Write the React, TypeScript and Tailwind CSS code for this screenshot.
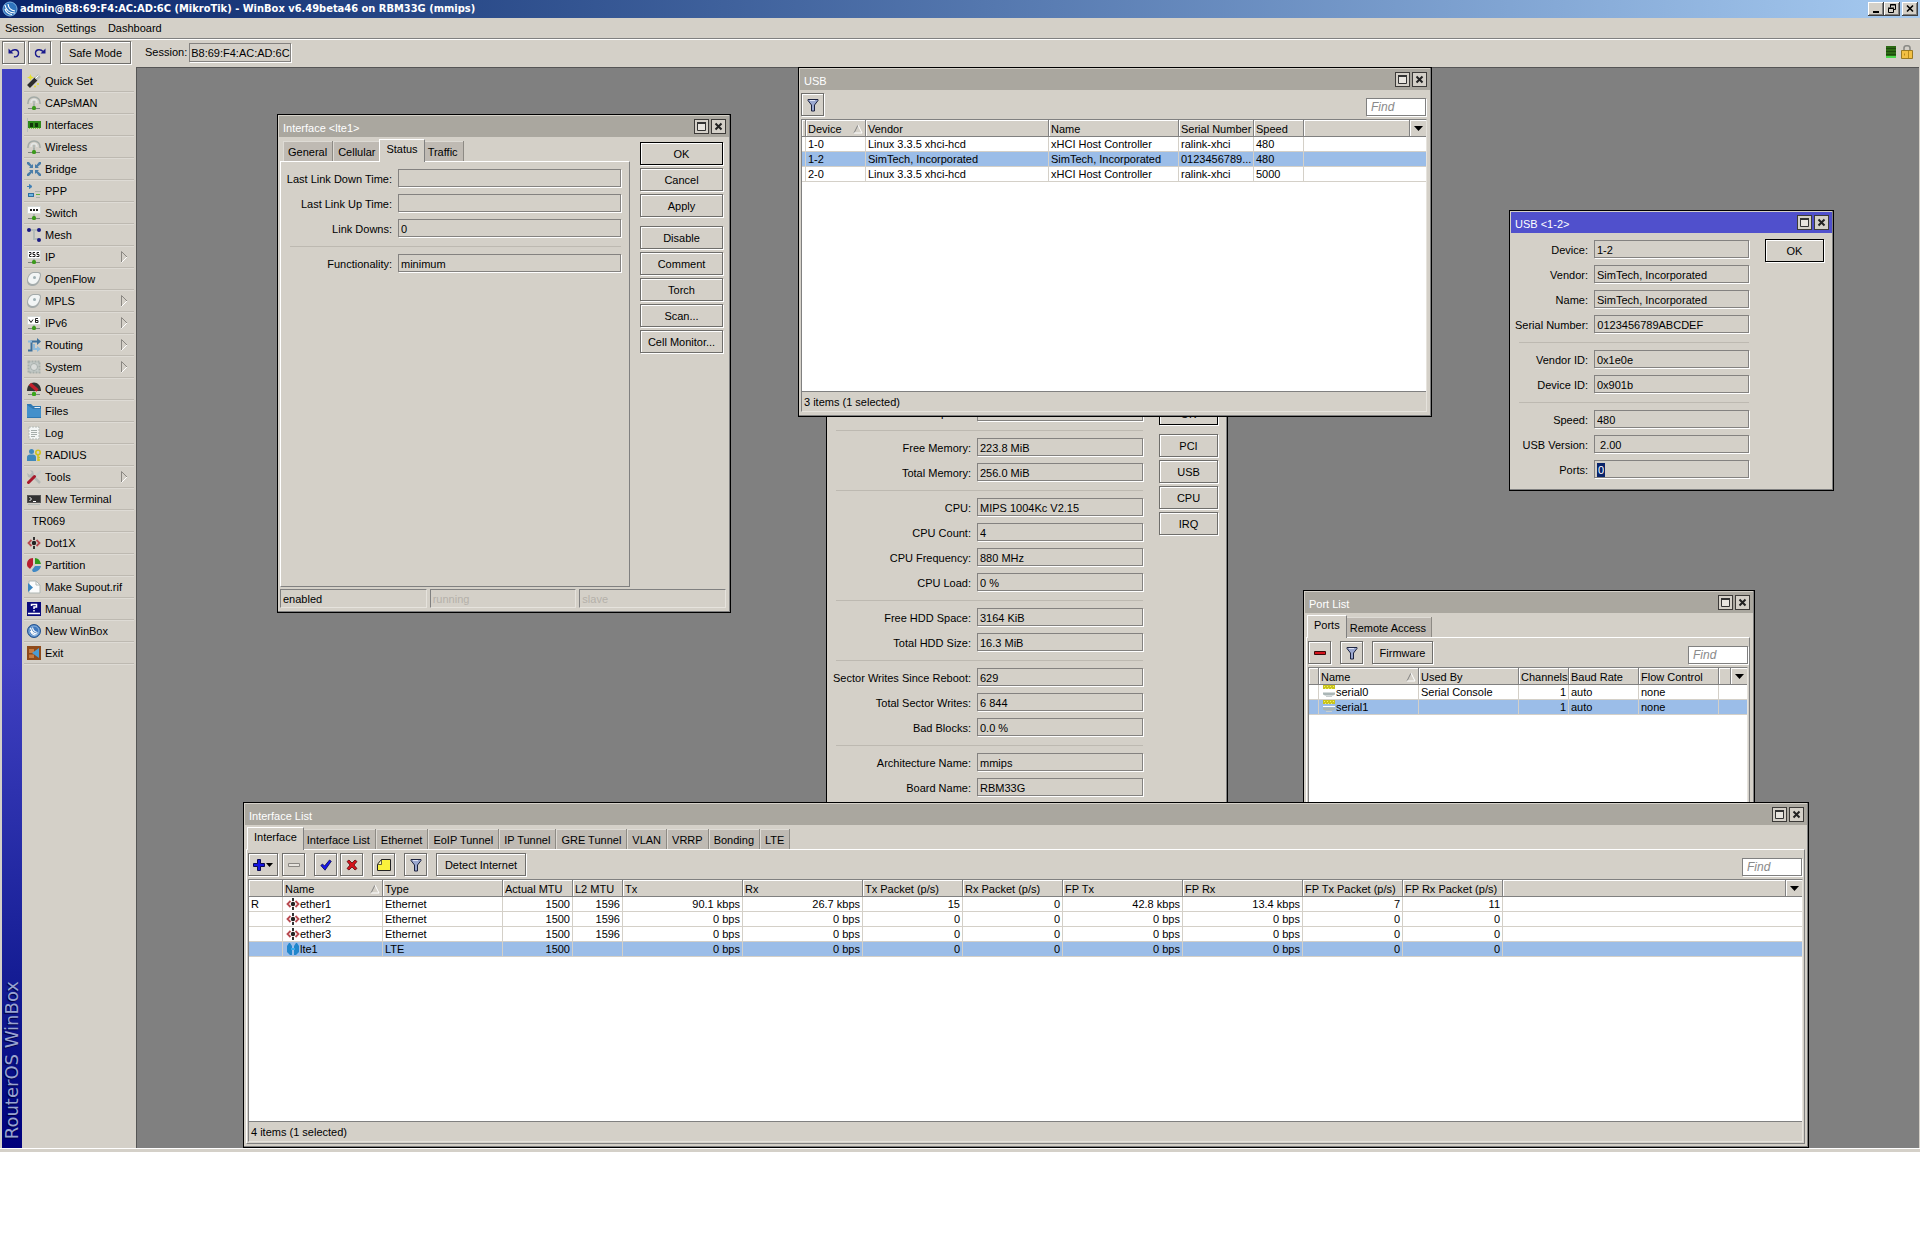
import { ReactNode, useId } from 'react';
import clsx from 'clsx';

type IconName =
  | 'wand' | 'antenna' | 'card' | 'bridge' | 'ppp' | 'switch' | 'mesh' | 'ip' | 'tag' | 'ipv6'
  | 'routing' | 'gear' | 'queues' | 'folder' | 'log' | 'radius' | 'tools' | 'terminal' | 'ether'
  | 'partition' | 'supout' | 'manual' | 'winbox' | 'exit' | 'serial' | 'lte';

const stand = (
  <>
    <path d="M7 8v4" stroke="#a9b0ac" strokeWidth="2" />
    <path d="M1 12.5h12" stroke="#7d837f" strokeWidth="1" />
    <rect x="5" y="10" width="4" height="4" rx="1.5" fill="#3c9a1c" />
  </>
);

const icons: Record<IconName, ReactNode> = {
  wand: (
    <>
      <path d="M1.500 12.500L9 5" stroke="#2c2c2c" strokeWidth="4" />
      <path d="M9 5l3.500-3.500" stroke="#b9bdbb" strokeWidth="4" />
      <path d="M8.500 4.500l3-3" stroke="#fff" strokeWidth="1" />
      <path d="M3.500 0l1 2.500L7 3.500l-2.500 1L3.500 7l-1-2.500L0 3.500l2.500-1z" fill="#e5e030" />
      <circle cx="11" cy="10" r="1" fill="#e5e030" />
      <circle cx="8" cy="12.500" r="1" fill="#e5e030" />
    </>
  ),
  antenna: (
    <>
      <path d="M1 8C.5 3.500 3.500 1 7 1s6.500 2.500 6 7" fill="none" stroke="#a3aaa6" strokeWidth="1.500" />
      <path d="M4 7c0-2.500 1-3.500 3-3.500s3 1 3 3.500" fill="none" stroke="#e3e6e5" strokeWidth="1.500" />
      <path d="M7 5v6" stroke="#b3bab6" strokeWidth="2" />
      {stand}
    </>
  ),
  card: (
    <>
      <path d="M.5 0v14" stroke="#b8bebb" strokeWidth="1" />
      <rect x="1" y="3" width="13" height="7" fill="#2f8a1a" />
      <rect x="3" y="5" width="3" height="4" fill="#12380a" />
      <rect x="8" y="5" width="3" height="4" fill="#12380a" />
      <path d="M2 10.500h12" stroke="#8ac63f" strokeWidth="1" strokeDasharray="1 1" />
    </>
  ),
  bridge: (
    <g fill="#4a7da8">
      <path d="M6 6H2l1.300-1.300L0 2V0h2l2.700 3.300L6 2zM8 6h4l-1.300-1.300L14 2V0h-2L9.300 3.300 8 2zM6 8H2l1.300 1.300L0 12v2h2l2.700-3.300L6 12zM8 8h4l-1.300 1.300L14 12v2h-2l-2.700-3.300L8 12z" />
    </g>
  ),
  ppp: (
    <>
      <path d="M0 2.500h3M2.500.5l2.500 2-2.500 2z" stroke="#3f7fb5" strokeWidth="1" fill="#3f7fb5" />
      <rect x="1.500" y="9.500" width="5" height="3" fill="#6db4e0" stroke="#2f6f9f" />
      <path d="M8 7.500h6M9 13.500h4" stroke="#a9b0ac" />
      <path d="M9 10.500h4" stroke="#5fae3a" />
    </>
  ),
  switch: (
    <>
      {stand}
      <rect x=".5" y=".5" width="13" height="7" fill="#fff" stroke="#d5d9d7" />
      <path d="M3 4h8" stroke="#222" strokeWidth="2" strokeDasharray="2 1" />
    </>
  ),
  mesh: (
    <>
      <path d="M2 2h10M7 2v9h5" fill="none" stroke="#b3bbb8" strokeWidth="2" />
      <circle cx="2" cy="2" r="2" fill="#1b1b82" />
      <circle cx="12" cy="2" r="2" fill="#1b1b82" />
      <circle cx="12" cy="12" r="2" fill="#1b1b82" />
    </>
  ),
  ip: (
    <>
      {stand}
      <rect x=".5" y=".5" width="13" height="8" fill="#fff" stroke="#d5d9d7" />
      <path d="M2 2.500h2v2H2.500v2H4.500M8 2.500H6v2h2v2H5.500M12 2.500h-2v2h2v2H9.500" fill="none" stroke="#222" />
    </>
  ),
  tag: (
    <>
      <path d="M6 0h5c2 0 3 1 3 3-1 7-4 11-8 11-4 0-6-2-6-5 0-4 2-8 6-9z" fill="#a4abab" />
      <path d="M6 1h5c1 0 2 1 2 2-1 6-4 9-7 9-3 0-5-2-5-4 0-3 2-6 5-7z" fill="#f2f5f5" />
      <circle cx="7.500" cy="5.500" r="1.500" fill="#9fb0b4" />
    </>
  ),
  ipv6: (
    <>
      {stand}
      <rect x=".5" y=".5" width="13" height="8" fill="#fff" stroke="#d5d9d7" />
      <path d="M2 3.500l2 3 2-3M11 2.500H8.500v4H11v-2H8.500" fill="none" stroke="#222" />
    </>
  ),
  routing: (
    <>
      <path d="M1 12.500h3.500V3.500H11" fill="none" stroke="#3e719c" strokeWidth="2" />
      <path d="M10 0l4 3.500L10 7z" fill="#3e719c" />
      <path d="M1 3.500h4M7 6v5h4" fill="none" stroke="#8fbbdc" strokeWidth="2" />
      <path d="M10 8l4 3-4 3z" fill="#8fbbdc" />
    </>
  ),
  gear: (
    <>
      <rect x="1.500" y="1.500" width="11" height="11" fill="#c5cbc9" stroke="#a7afac" strokeDasharray="2 1" strokeWidth="2" />
      <circle cx="7" cy="7" r="3.500" fill="#d9dcda" stroke="#a7afac" />
    </>
  ),
  queues: (
    <>
      {stand}
      <path d="M0 9C0-2.500 14-2.500 14 9z" fill="#333" />
      <path d="M3 2L10.500 8.500" stroke="#c3202c" strokeWidth="3.500" />
      <rect x="5" y="10" width="4" height="4" rx="2" fill="#3aa81c" />
    </>
  ),
  folder: (
    <>
      <path d="M0 0h4l2 2h8v12H0z" fill="#2f78b2" />
      <path d="M7 3h6v1H8z" fill="#e8f1f8" />
      <path d="M0 1l6 4h8v8H0z" fill="#4390cb" />
    </>
  ),
  log: (
    <>
      <path d="M2 1h10v12H2z" fill="#f4f6f5" stroke="#b3bab7" strokeDasharray="2 1" />
      <path d="M4 4.500h6M4 6.500h6M4 8.500h6M4 10.500h4" stroke="#a5adaa" />
    </>
  ),
  radius: (
    <>
      <circle cx="4.500" cy="3.500" r="2.500" fill="#3f88bb" />
      <path d="M0 13V9c0-2 2-2.500 4.500-2.500S9 7 9 9v4z" fill="#3f88bb" />
      <circle cx="11" cy="4.500" r="2.200" fill="none" stroke="#cfc21a" strokeWidth="1.600" />
      <path d="M11 7v6M11 9.500h2M11 12h2" stroke="#cfc21a" strokeWidth="1.500" />
    </>
  ),
  tools: (
    <>
      <path d="M13 13L4 4" stroke="#b4bab7" strokeWidth="2.500" />
      <path d="M0 3l3 2 2-2-2-3 3 1 1 4-3 3-3-1z" fill="#b4bab7" />
      <path d="M14 1L8 7" stroke="#c8cdca" strokeWidth="2" />
      <path d="M7.500 6.500L1.500 12.500" stroke="#a81a2c" strokeWidth="3" strokeLinecap="round" />
    </>
  ),
  terminal: (
    <>
      <rect x=".5" y="3.500" width="13" height="7" fill="#333" stroke="#555" />
      <path d="M2.500 5l2 2-2 2M6 9.500h3" stroke="#fff" fill="none" />
      <path d="M1 12.500h12" stroke="#b4bab7" />
    </>
  ),
  ether: (
    <>
      <path d="M4.500 4L1.500 7l3 3M9.500 4l3 3-3 3" fill="none" stroke="#b84a50" strokeWidth="1.800" />
      <path d="M7 1v3M7 10v3" stroke="#333" strokeWidth="2" />
      <circle cx="7" cy="7" r="2.200" fill="#222" />
    </>
  ),
  partition: (
    <>
      <path d="M6 0C2 0 0 3 0 6s1 3 3 5l3-4z" fill="#b81e30" />
      <path d="M8 0c3 0 5 2 6 6H8z" fill="#2f9a1c" />
      <path d="M14 8c-1 4-4 6-8 6l-1-2 3-4z" fill="#3f88c4" />
    </>
  ),
  supout: (
    <>
      <path d="M2 1h7l4 4v8H2z" fill="#fbfcfc" stroke="#b0b8b5" />
      <path d="M9 1v4h4" fill="none" stroke="#b0b8b5" />
      <path d="M1 3l5 4.500L1 12z" fill="#3a86bf" />
    </>
  ),
  manual: (
    <>
      <rect width="14" height="14" fill="#0a0a7c" />
      <path d="M1 11.500h12" stroke="#fff" strokeWidth="1.500" />
      <path d="M4.500 4V2.500h5V5H7v2M7 8v1.500" stroke="#fff" strokeWidth="1.500" fill="none" />
    </>
  ),
  winbox: (
    <>
      <circle cx="7" cy="7" r="6.500" fill="#3f78bd" stroke="#27548f" />
      <circle cx="7" cy="7" r="5" fill="none" stroke="#8db6e0" />
      <path d="M3.500 4c1 4 3 6 7 6M5.500 3.500c.5 3 2 4.500 5 5M3.500 7c1 2.500 3 4 5 4" fill="none" stroke="#fff" strokeWidth="1.200" />
    </>
  ),
  exit: (
    <>
      <rect width="14" height="14" fill="#8f4a1a" />
      <path d="M2 3h5v4H2zM2 8.500h5V12H2z" fill="#c77b40" />
      <path d="M12 2v10L5 7z" fill="#4b9cd3" />
    </>
  ),
  serial: (
    <>
      <path d="M1 0h12v4H1z" fill="#c9c41c" />
      <path d="M2 1.500h10M3 3.500h9" stroke="#f3ef70" strokeDasharray="1 2" />
      <path d="M1 6.500h12" stroke="#fff" />
      <path d="M1 7.500h12v2l-2 1H3l-2-1z" fill="#aab6b6" />
      <path d="M4 11.500h6" stroke="#c9cfcf" />
    </>
  ),
  lte: (
    <g fill="#2186cc">
      <path d="M3 1h1l2 3v9H4l-2-2-1-1V4z" />
      <path d="M11 1h-1L8 4v9h2l2-2 1-1V4z" />
      <path d="M5 6h4v2H5z" fill="#3aa9ea" />
    </g>
  ),
};

const Icon = ({ name }: { name: IconName }) => (
  <svg viewBox="0 0 14 14" className="size-3.5 shrink-0" aria-hidden="true">
    {icons[name]}
  </svg>
);

const FunnelIcon = () => (
  <svg viewBox="0 0 14 14" className="size-3.5" aria-hidden="true">
    <path d="M2 1.500h10v1L8.500 7v6h-3V7L2 2.500z" fill="#9aa7cf" stroke="#1c2340" />
    <path d="M4 2.500h5" stroke="#dfe4f5" />
  </svg>
);

interface WinButtonProps {
  children: ReactNode;
  label?: string;
  className?: string;
  isDefault?: boolean;
}

const WinButton = ({ children, label, className, isDefault }: WinButtonProps) => (
  <button
    type="button"
    aria-label={label}
    className={clsx(
      'flex h-[23px] shrink-0 items-center justify-center border whitespace-nowrap shadow-[1px_1px_0_#fff,inset_1px_1px_0_#fff]',
      isDefault ? 'border-black' : 'border-[#6f6e6b]',
      className,
    )}
  >
    {children}
  </button>
);

const FindBox = () => (
  <input
    type="text"
    aria-label="Find"
    placeholder="Find"
    className="h-[18px] w-[60px] border border-[#808080] bg-white px-1 text-xs italic shadow-[1px_1px_0_#fff] outline-none placeholder:text-[#8a8a8a]"
  />
);

interface WindowProps {
  title: string;
  className: string;
  active?: boolean;
  children: ReactNode;
}

const Window = ({ title, className, active, children }: WindowProps) => (
  <section
    className={clsx(
      'absolute flex flex-col border border-black bg-[#d4d0c8] p-px shadow-[inset_-1px_-1px_0_#808080]',
      className,
    )}
  >
    <header
      className={clsx(
        'flex h-[21px] shrink-0 items-center gap-0.5 pr-[3px] pl-1 text-white',
        active ? 'bg-[#5050cc]' : 'bg-[#aaa79f]',
      )}
    >
      <h2 className="flex-1 pt-0.5">{title}</h2>
      <button type="button" aria-label="Maximize" className="size-[15px] border border-[#3c3a38] bg-[#d4d0c8]">
        <svg viewBox="0 0 13 13" className="size-[13px]" aria-hidden="true">
          <path d="M2.500 2.500h8v8h-8z" fill="#e8e5df" stroke="#333" />
          <path d="M2 3h9" stroke="#333" strokeWidth="2" />
        </svg>
      </button>
      <button type="button" aria-label="Close" className="size-[15px] border border-[#3c3a38] bg-[#d4d0c8]">
        <svg viewBox="0 0 13 13" className="size-[13px]" aria-hidden="true">
          <path d="M3.500 3.500l6 6M9.500 3.500l-6 6" stroke="#222" strokeWidth="2" />
        </svg>
      </button>
    </header>
    {children}
  </section>
);

interface TabsProps {
  tabs: string[];
  selected: string;
}

const Tabs = ({ tabs, selected }: TabsProps) => (
  <div role="tablist" className="relative z-10 -mb-px flex h-[25px] shrink-0 items-end pl-[3px]">
    {tabs.map((tab) =>
      tab === selected ? (
        <button
          key={tab}
          type="button"
          role="tab"
          aria-selected="true"
          className="relative z-10 -mx-0.5 h-[23px] border-t border-r border-l border-t-white border-r-[#808080] border-l-white bg-[#d4d0c8] px-[6px] pb-1"
        >
          {tab}
        </button>
      ) : (
        <button
          key={tab}
          type="button"
          role="tab"
          aria-selected="false"
          className="mb-px h-5 border-r border-[#8d8a84] bg-[#bfbab3] px-[5px] pt-px whitespace-nowrap shadow-[inset_1px_1px_0_#dedbd5]"
        >
          {tab}
        </button>
      ),
    )}
  </div>
);

interface FieldProps {
  label: string;
  value: string;
  selected?: boolean;
}

const Field = ({ label, value, selected }: FieldProps) => {
  const id = useId();
  return (
    <div className="flex h-[18px] items-center gap-[6px]">
      <label htmlFor={id} className="flex-1 pt-0.5 text-right whitespace-nowrap">
        {label}
      </label>
      <div className="flex h-[18px] w-(--field) shrink-0 items-end border border-[#848280] px-0.5 shadow-[1px_1px_0_#fff]">
        <input
          id={id}
          readOnly
          value={value}
          className={clsx(
            'h-3.5 min-w-0 outline-none',
            selected ? 'w-2 bg-[#0a246a] px-px text-white' : 'w-full bg-transparent',
          )}
        />
      </div>
    </div>
  );
};

const Form = ({ groups, className }: { groups: FieldProps[][]; className: string }) => (
  <div className={clsx('flex min-w-0 flex-col gap-[7px] pl-1', className)}>
    {groups.map((group, i) => (
      <div key={group[0].label} className="flex flex-col gap-[7px]">
        {i > 0 && <hr className="mt-0.5 ml-1 border-[#bdb9b1]" />}
        {group.map((field) => (
          <Field key={field.label} {...field} />
        ))}
      </div>
    ))}
  </div>
);

interface Column {
  title: string;
  width: string;
  right?: boolean;
  sorted?: boolean;
}

interface Row {
  cells: string[];
  icon?: IconName;
  selected?: boolean;
}

const ListTable = ({ columns, rows }: { columns: Column[]; rows: Row[] }) => (
  <table className="w-full table-fixed border-separate border-spacing-0 leading-[14px]">
    <colgroup>
      {columns.map((col, i) => (
        <col key={i} className={col.width} />
      ))}
      <col />
      <col className="w-4" />
    </colgroup>
    <thead>
      <tr className="bg-[#d4d0c8]">
        {columns.map((col, i) => (
          <th
            key={i}
            className="h-[17px] border-r border-b border-[#808080] p-0 pt-px pl-0.5 text-left font-normal whitespace-nowrap shadow-[inset_1px_1px_0_#fff]"
          >
            <div className="flex items-center justify-between">
              {col.title}
              {col.sorted && (
                <svg viewBox="0 0 10 10" className="mr-0.5 size-2.5 shrink-0" aria-hidden="true">
                  <path d="M1 9L5 1" stroke="#808080" />
                  <path d="M5 1l4 8H1" fill="none" stroke="#fff" />
                </svg>
              )}
            </div>
          </th>
        ))}
        <th className="border-r border-b border-[#808080] p-0 shadow-[inset_1px_1px_0_#fff]" />
        <th className="border-b border-[#808080] p-0 shadow-[inset_1px_1px_0_#fff]">
          <button type="button" aria-label="Columns" className="flex h-4 w-full items-center justify-center">
            <svg viewBox="0 0 9 5" className="h-[5px] w-[9px]" aria-hidden="true">
              <path d="M0 0h9L4.500 5z" />
            </svg>
          </button>
        </th>
      </tr>
    </thead>
    <tbody>
      {rows.map((row) => (
        <tr key={row.cells[1]} className={row.selected ? 'bg-[#9bbde8]' : 'bg-white'}>
          {row.cells.map((cell, i) => (
            <td
              key={i}
              className={clsx(
                'h-[15px] overflow-hidden border-r border-b border-[#d4d0c8] p-0 whitespace-nowrap',
                columns[i].right ? 'pr-0.5 text-right' : 'pl-0.5',
              )}
            >
              {i === 1 && row.icon ? (
                <div className="flex h-3.5 items-center pl-px">
                  <Icon name={row.icon} />
                  {cell}
                </div>
              ) : (
                cell
              )}
            </td>
          ))}
          <td colSpan={2} className="border-b border-[#d4d0c8] p-0" />
        </tr>
      ))}
    </tbody>
  </table>
);

const menu: { label: string; icon?: IconName; more?: boolean }[] = [
  { label: 'Quick Set', icon: 'wand' },
  { label: 'CAPsMAN', icon: 'antenna' },
  { label: 'Interfaces', icon: 'card' },
  { label: 'Wireless', icon: 'antenna' },
  { label: 'Bridge', icon: 'bridge' },
  { label: 'PPP', icon: 'ppp' },
  { label: 'Switch', icon: 'switch' },
  { label: 'Mesh', icon: 'mesh' },
  { label: 'IP', icon: 'ip', more: true },
  { label: 'OpenFlow', icon: 'tag' },
  { label: 'MPLS', icon: 'tag', more: true },
  { label: 'IPv6', icon: 'ipv6', more: true },
  { label: 'Routing', icon: 'routing', more: true },
  { label: 'System', icon: 'gear', more: true },
  { label: 'Queues', icon: 'queues' },
  { label: 'Files', icon: 'folder' },
  { label: 'Log', icon: 'log' },
  { label: 'RADIUS', icon: 'radius' },
  { label: 'Tools', icon: 'tools', more: true },
  { label: 'New Terminal', icon: 'terminal' },
  { label: 'TR069' },
  { label: 'Dot1X', icon: 'ether' },
  { label: 'Partition', icon: 'partition' },
  { label: 'Make Supout.rif', icon: 'supout' },
  { label: 'Manual', icon: 'manual' },
  { label: 'New WinBox', icon: 'winbox' },
  { label: 'Exit', icon: 'exit' },
];

const usbColumns: Column[] = [
  { title: '', width: 'w-[4px]' },
  { title: 'Device', width: 'w-[60px]', sorted: true },
  { title: 'Vendor', width: 'w-[183px]' },
  { title: 'Name', width: 'w-[130px]' },
  { title: 'Serial Number', width: 'w-[75px]' },
  { title: 'Speed', width: 'w-[50px]' },
];

const usbRows: Row[] = [
  { cells: ['', '1-0', 'Linux 3.3.5 xhci-hcd', 'xHCI Host Controller', 'ralink-xhci', '480'] },
  { cells: ['', '1-2', 'SimTech, Incorporated', 'SimTech, Incorporated', '0123456789...', '480'], selected: true },
  { cells: ['', '2-0', 'Linux 3.3.5 xhci-hcd', 'xHCI Host Controller', 'ralink-xhci', '5000'] },
];

const portColumns: Column[] = [
  { title: '', width: 'w-[10px]' },
  { title: 'Name', width: 'w-[100px]', sorted: true },
  { title: 'Used By', width: 'w-[100px]' },
  { title: 'Channels', width: 'w-[50px]', right: true },
  { title: 'Baud Rate', width: 'w-[70px]' },
  { title: 'Flow Control', width: 'w-[80px]' },
];

const portRows: Row[] = [
  { cells: ['', 'serial0', 'Serial Console', '1', 'auto', 'none'], icon: 'serial' },
  { cells: ['', 'serial1', '', '1', 'auto', 'none'], icon: 'serial', selected: true },
];

const interfaceColumns: Column[] = [
  { title: '', width: 'w-[34px]' },
  { title: 'Name', width: 'w-[100px]', sorted: true },
  { title: 'Type', width: 'w-[120px]' },
  { title: 'Actual MTU', width: 'w-[70px]', right: true },
  { title: 'L2 MTU', width: 'w-[50px]', right: true },
  { title: 'Tx', width: 'w-[120px]', right: true },
  { title: 'Rx', width: 'w-[120px]', right: true },
  { title: 'Tx Packet (p/s)', width: 'w-[100px]', right: true },
  { title: 'Rx Packet (p/s)', width: 'w-[100px]', right: true },
  { title: 'FP Tx', width: 'w-[120px]', right: true },
  { title: 'FP Rx', width: 'w-[120px]', right: true },
  { title: 'FP Tx Packet (p/s)', width: 'w-[100px]', right: true },
  { title: 'FP Rx Packet (p/s)', width: 'w-[100px]', right: true },
];

const idle = ['0 bps', '0 bps', '0', '0', '0 bps', '0 bps', '0', '0'];

const interfaceRows: Row[] = [
  {
    cells: ['R', 'ether1', 'Ethernet', '1500', '1596', '90.1 kbps', '26.7 kbps', '15', '0', '42.8 kbps', '13.4 kbps', '7', '11'],
    icon: 'ether',
  },
  { cells: ['', 'ether2', 'Ethernet', '1500', '1596', ...idle], icon: 'ether' },
  { cells: ['', 'ether3', 'Ethernet', '1500', '1596', ...idle], icon: 'ether' },
  { cells: ['', 'lte1', 'LTE', '1500', '', ...idle], icon: 'lte', selected: true },
];

const interfaceStatus: FieldProps[][] = [
  [
    { label: 'Last Link Down Time:', value: '' },
    { label: 'Last Link Up Time:', value: '' },
    { label: 'Link Downs:', value: '0' },
  ],
  [{ label: 'Functionality:', value: 'minimum' }],
];

const usbDevice: FieldProps[][] = [
  [
    { label: 'Device:', value: '1-2' },
    { label: 'Vendor:', value: 'SimTech, Incorporated' },
    { label: 'Name:', value: 'SimTech, Incorporated' },
    { label: 'Serial Number:', value: '0123456789ABCDEF' },
  ],
  [
    { label: 'Vendor ID:', value: '0x1e0e' },
    { label: 'Device ID:', value: '0x901b' },
  ],
  [
    { label: 'Speed:', value: '480' },
    { label: 'USB Version:', value: ' 2.00' },
    { label: 'Ports:', value: '0', selected: true },
  ],
];

const resources: FieldProps[][] = [
  [{ label: 'Uptime:', value: '' }],
  [
    { label: 'Free Memory:', value: '223.8 MiB' },
    { label: 'Total Memory:', value: '256.0 MiB' },
  ],
  [
    { label: 'CPU:', value: 'MIPS 1004Kc V2.15' },
    { label: 'CPU Count:', value: '4' },
    { label: 'CPU Frequency:', value: '880 MHz' },
    { label: 'CPU Load:', value: '0 %' },
  ],
  [
    { label: 'Free HDD Space:', value: '3164 KiB' },
    { label: 'Total HDD Size:', value: '16.3 MiB' },
  ],
  [
    { label: 'Sector Writes Since Reboot:', value: '629' },
    { label: 'Total Sector Writes:', value: '6 844' },
    { label: 'Bad Blocks:', value: '0.0 %' },
  ],
  [
    { label: 'Architecture Name:', value: 'mmips' },
    { label: 'Board Name:', value: 'RBM33G' },
  ],
];

const ListFrame = ({ children, status }: { children: ReactNode; status: string }) => (
  <div className="flex flex-1 flex-col border border-t-[#808080] border-r-[#e6e3dd] border-b-[#e6e3dd] border-l-[#808080]">
    <div className="flex-1 bg-white">{children}</div>
    <div className="h-5 shrink-0 border-t border-[#808080] pt-px pl-0.5 leading-[18px]">{status}</div>
  </div>
);

const InterfaceWindow = () => (
  <Window title="Interface <lte1>" className="top-[46px] left-[140px] h-[499px] w-[454px]">
    <div className="flex flex-1">
      <div className="flex min-w-0 flex-1 flex-col pl-px">
        <Tabs tabs={['General', 'Cellular', 'Status', 'Traffic']} selected="Status" />
        <div className="flex-1 border border-t-white border-r-[#808080] border-b-[#808080] border-l-white pt-[7px] pr-2 pl-px">
          <Form groups={interfaceStatus} className="[--field:223px]" />
        </div>
      </div>
      <div className="flex w-[99px] shrink-0 flex-col gap-[3px] pt-[5px] pr-[6px] pl-2.5">
        <WinButton isDefault>OK</WinButton>
        <WinButton>Cancel</WinButton>
        <WinButton>Apply</WinButton>
        <WinButton className="mt-[6px]">Disable</WinButton>
        <WinButton>Comment</WinButton>
        <WinButton>Torch</WinButton>
        <WinButton>Scan...</WinButton>
        <WinButton>Cell Monitor...</WinButton>
      </div>
    </div>
    <div className="mt-0.5 mb-[3px] flex h-[19px] gap-[3px] pr-[3px] pl-px leading-[18px] text-[#b5b1aa]">
      {['enabled', 'running', 'slave'].map((state) => (
        <div
          key={state}
          className={clsx(
            'flex-1 border border-t-[#808080] border-r-[#e6e3dd] border-b-[#e6e3dd] border-l-[#808080] pl-0.5',
            state === 'enabled' && 'text-black',
          )}
        >
          {state}
        </div>
      ))}
    </div>
  </Window>
);

const ResourcesWindow = () => (
  <Window title="Resources" className="top-[305px] left-[689px] h-[460px] w-[402px]">
    <div className="flex flex-1">
      <Form groups={resources} className="flex-1 pt-[7px] [--field:166px]" />
      <div className="flex w-[83px] shrink-0 flex-col gap-[3px] pt-[6px] pr-2 pl-4">
        <WinButton isDefault>OK</WinButton>
        <WinButton className="mt-[6px]">PCI</WinButton>
        <WinButton>USB</WinButton>
        <WinButton>CPU</WinButton>
        <WinButton>IRQ</WinButton>
      </div>
    </div>
  </Window>
);

const PortListWindow = () => (
  <Window title="Port List" className="top-[522px] left-[1166px] h-[280px] w-[452px]">
    <div className="flex flex-1 flex-col pr-[3px] pb-[2px] pl-px">
      <Tabs tabs={['Ports', 'Remote Access']} selected="Ports" />
      <div className="flex flex-1 flex-col border border-t-white border-r-[#808080] border-b-[#808080] border-l-white px-px pt-[3px]">
        <div className="mb-[3px] flex items-end">
          <WinButton label="Remove" className="w-[23px]">
            <svg viewBox="0 0 12 4" className="h-1 w-3" aria-hidden="true">
              <path d="M.5.500h11v3H.5z" fill="#d4141c" stroke="#3c0c0c" />
            </svg>
          </WinButton>
          <WinButton label="Filter" className="ml-[9px] w-[23px]">
            <FunnelIcon />
          </WinButton>
          <WinButton className="mr-auto ml-[9px] w-[61px]">Firmware</WinButton>
          <FindBox />
        </div>
        <ListFrame status="2 items (1 selected)">
          <ListTable columns={portColumns} rows={portRows} />
        </ListFrame>
      </div>
    </div>
  </Window>
);

const UsbWindow = () => (
  <Window title="USB" className="-top-px left-[661px] h-[350px] w-[634px]">
    <div className="flex flex-1 flex-col pt-[3px] pr-[3px] pb-[3px] pl-px">
      <div className="mb-[3px] flex items-end justify-between pr-px">
        <WinButton label="Filter" className="w-[23px]">
          <FunnelIcon />
        </WinButton>
        <FindBox />
      </div>
      <ListFrame status="3 items (1 selected)">
        <ListTable columns={usbColumns} rows={usbRows} />
      </ListFrame>
    </div>
  </Window>
);

const UsbDeviceWindow = () => (
  <Window title="USB <1-2>" active className="top-[142px] left-[1372px] h-[281px] w-[325px]">
    <div className="flex flex-1">
      <Form groups={usbDevice} className="flex-1 pt-[7px] [--field:155px]" />
      <div className="w-[83px] shrink-0 pt-[6px] pr-2 pl-4">
        <WinButton isDefault className="w-full">
          OK
        </WinButton>
      </div>
    </div>
  </Window>
);

const interfaceTabs = [
  'Interface', 'Interface List', 'Ethernet', 'EoIP Tunnel', 'IP Tunnel',
  'GRE Tunnel', 'VLAN', 'VRRP', 'Bonding', 'LTE',
];

const InterfaceListWindow = () => (
  <Window title="Interface List" className="top-[734px] left-[106px] h-[346px] w-[1566px]">
    <div className="flex flex-1 flex-col pr-[2px] pb-[2px] pl-px">
      <Tabs tabs={interfaceTabs} selected="Interface" />
      <div className="flex flex-1 flex-col border border-t-white border-r-[#808080] border-b-[#808080] border-l-white px-px pt-[3px] pb-px">
        <div className="mb-[3px] flex items-end pr-px">
          <WinButton label="Add" className="w-[30px] gap-px">
            <svg viewBox="0 0 12 12" className="size-3" aria-hidden="true">
              <path d="M4.500.500h3v4h4v3h-4v4h-3v-4h-4v-3h4z" fill="#1414e0" stroke="#0a0a50" />
            </svg>
            <svg viewBox="0 0 7 4" className="h-1 w-[7px]" aria-hidden="true">
              <path d="M0 0h7L3.500 4z" />
            </svg>
          </WinButton>
          <WinButton label="Remove" className="ml-1 w-[23px]">
            <svg viewBox="0 0 12 4" className="h-1 w-3" aria-hidden="true">
              <path d="M.5.500h11v3H.5z" fill="#e6e3dd" stroke="#8a8782" />
            </svg>
          </WinButton>
          <WinButton label="Enable" className="ml-[9px] w-[23px]">
            <svg viewBox="0 0 12 12" className="size-3" aria-hidden="true">
              <path d="M.8 6.500L2.500 5l2 2L9.500 1l1.800 1.300L5 11.200z" fill="#1818e8" stroke="#0a0a50" strokeWidth=".8" />
            </svg>
          </WinButton>
          <WinButton label="Disable" className="ml-[3px] w-[23px]">
            <svg viewBox="0 0 12 12" className="size-3" aria-hidden="true">
              <path d="M1 2.500L3 1l3 3 3-3 2 1.500L8 6l3 3.500L9 11 6 8l-3 3-2-1.500L4 6z" fill="#d4141c" stroke="#5a0a0e" strokeWidth=".8" />
            </svg>
          </WinButton>
          <WinButton label="Comment" className="ml-[9px] w-[23px]">
            <svg viewBox="0 0 14 12" className="h-3 w-3.5" aria-hidden="true">
              <path d="M4.500.500h9v11H.5v-6z" fill="#fbf23c" stroke="#222" />
              <path d="M4.500.500v5h-4z" fill="#fdfac0" stroke="#222" strokeWidth=".7" />
            </svg>
          </WinButton>
          <WinButton label="Filter" className="ml-[9px] w-[23px]">
            <FunnelIcon />
          </WinButton>
          <WinButton className="mr-auto ml-[9px] w-[90px]">Detect Internet</WinButton>
          <FindBox />
        </div>
        <ListFrame status="4 items (1 selected)">
          <ListTable columns={interfaceColumns} rows={interfaceRows} />
        </ListFrame>
      </div>
    </div>
  </Window>
);

const captionButton =
  'flex h-3.5 w-4 items-center justify-center bg-[#d4d0c8] shadow-[inset_-1px_-1px_0_#404040,inset_1px_1px_0_#fff,inset_-2px_-2px_0_#808080]';

const TitleBar = () => (
  <header className="flex h-[18px] shrink-0 items-center bg-linear-to-r from-[#0a246a] to-[#a6caf0] pr-0.5 pl-0.5">
    <svg viewBox="0 0 16 16" className="size-4" aria-hidden="true">
      <circle cx="8" cy="8" r="7" fill="#2f74bd" stroke="#7ab1e2" />
      <path d="M3 4c1 5 4 8 10 8M6 3c.5 4 3 6.500 7 7M3 8c1 3 4 5.500 7 5.500" fill="none" stroke="#fff" strokeWidth="1.200" />
    </svg>
    <h1 className="ml-0.5 flex-1 font-['DejaVu_Sans_Condensed','DejaVu_Sans',sans-serif] font-bold text-white">
      admin@B8:69:F4:AC:AD:6C (MikroTik) - WinBox v6.49beta46 on RBM33G (mmips)
    </h1>
    <button type="button" aria-label="Minimize" className={captionButton}>
      <svg viewBox="0 0 12 10" className="h-2.5 w-3" aria-hidden="true">
        <path d="M3 8h6" stroke="#000" strokeWidth="2" />
      </svg>
    </button>
    <button type="button" aria-label="Restore" className={captionButton}>
      <svg viewBox="0 0 12 10" className="h-2.5 w-3" aria-hidden="true">
        <path d="M4.500 3.500V.500h5v5h-2M4 1h6M2.500 4.500h5v4h-5zM2 4h6" fill="none" stroke="#000" />
      </svg>
    </button>
    <button type="button" aria-label="Close" className={clsx(captionButton, 'ml-0.5')}>
      <svg viewBox="0 0 12 10" className="h-2.5 w-3" aria-hidden="true">
        <path d="M3 1.500l6 6M9 1.500l-6 6" stroke="#000" strokeWidth="1.600" />
      </svg>
    </button>
  </header>
);

const Toolbar = () => (
  <div className="flex h-[28px] shrink-0 items-start border-t border-white pt-px pr-[7px] pl-0.5">
    <WinButton label="Undo" className="w-[23px]">
      <svg viewBox="0 0 12 12" className="size-3" aria-hidden="true">
        <path d="M3 4.500C5 2 10 2 10.500 5.500S8 10.500 6 9.500" fill="none" stroke="#1a1a8c" strokeWidth="1.400" />
        <path d="M.5 1.500v5h5z" fill="#1a1a8c" />
      </svg>
    </WinButton>
    <WinButton label="Redo" className="ml-[3px] w-[23px]">
      <svg viewBox="0 0 12 12" className="size-3" aria-hidden="true">
        <path d="M9 4.500C7 2 2 2 1.500 5.500S4 10.500 6 9.500" fill="none" stroke="#1a1a8c" strokeWidth="1.400" />
        <path d="M11.500 1.500v5h-5z" fill="#1a1a8c" />
      </svg>
    </WinButton>
    <WinButton className="ml-[9px] w-[71px]">Safe Mode</WinButton>
    <label htmlFor="session" className="ml-3.5 leading-[23px]">
      Session:
    </label>
    <input
      id="session"
      readOnly
      value="B8:69:F4:AC:AD:6C"
      className="mt-0.5 ml-0.5 h-[19px] w-[102px] border border-[#848280] pl-px shadow-[1px_1px_0_#fff] outline-none"
    />
    <svg viewBox="0 0 10 12" className="mt-[5px] ml-auto h-3 w-2.5" aria-hidden="true">
      <path d="M0 0h10v12H0z" fill="#2c6a14" />
      <path d="M0 2.500h10M0 5.500h10M0 8.500h10" stroke="#1c4a0c" />
      <path d="M0 11h10" stroke="#4cd84c" strokeWidth="2" />
    </svg>
    <svg viewBox="0 0 12 14" className="mt-1 ml-[5px] h-3.5 w-3" aria-hidden="true">
      <path d="M3 6V3c0-3 6-3 6 0v3" fill="none" stroke="#8a8a86" strokeWidth="1.600" />
      <path d="M.5 5.500h11v8H.5z" fill="#f3c044" stroke="#9a7a24" />
      <path d="M3.500 8.500v2M7.500 6v7" stroke="#b98a1a" />
    </svg>
  </div>
);

const Sidebar = () => (
  <aside className="flex w-[136px] shrink-0 pt-0.5 pl-0.5">
    <div className="flex w-5 shrink-0 items-end justify-center bg-linear-to-b from-[#4040c2] from-55% to-[#00007c] pb-[9px]">
      <span className="rotate-180 font-['DejaVu_Sans',sans-serif] text-[18px] leading-5 text-[#99a4d2] [text-shadow:-1px_-1px_1px_#00003c] [writing-mode:vertical-rl]">
        RouterOS WinBox
      </span>
    </div>
    <nav className="flex flex-1 flex-col px-0.5 pt-px">
      {menu.map(({ label, icon, more }) => (
        <button
          key={label}
          type="button"
          className="flex h-[22px] items-center gap-1 border-b border-[#bdb9b1] pt-px pl-[3px] whitespace-nowrap shadow-[0_1px_0_#dedbd5]"
        >
          {icon && <Icon name={icon} />}
          <span className={clsx('flex-1 text-left', !icon && 'pl-[5px]')}>{label}</span>
          {more && (
            <svg viewBox="0 0 7 12" className="mr-[6px] h-3 w-[7px]" aria-hidden="true">
              <path d="M.5 11V.500L6 6" fill="none" stroke="#8a8782" />
              <path d="M6 6L.5 11.500" stroke="#fff" />
            </svg>
          )}
        </button>
      ))}
    </nav>
  </aside>
);

export default function App() {
  return (
    <div className="flex h-screen flex-col bg-white pb-[82px] font-['Liberation_Sans',Arial,sans-serif] text-[11px] leading-[14px] text-black">
      <div className="flex flex-1 flex-col bg-[#d4d0c8]">
        <TitleBar />
        <nav className="flex h-[21px] shrink-0 items-center gap-3 border-b border-[#808080] pl-[5px]">
          <button type="button">Session</button>
          <button type="button">Settings</button>
          <button type="button">Dashboard</button>
        </nav>
        <Toolbar />
        <div className="flex flex-1 pr-px">
          <Sidebar />
          <main className="relative flex-1 border-t border-l border-[#555] bg-[#808080]">
            <InterfaceWindow />
            <ResourcesWindow />
            <PortListWindow />
            <UsbWindow />
            <UsbDeviceWindow />
            <InterfaceListWindow />
          </main>
        </div>
        <div className="h-1 shrink-0 bg-[#d4d0c8] shadow-[inset_0_1px_0_#fff]" />
      </div>
    </div>
  );
}
